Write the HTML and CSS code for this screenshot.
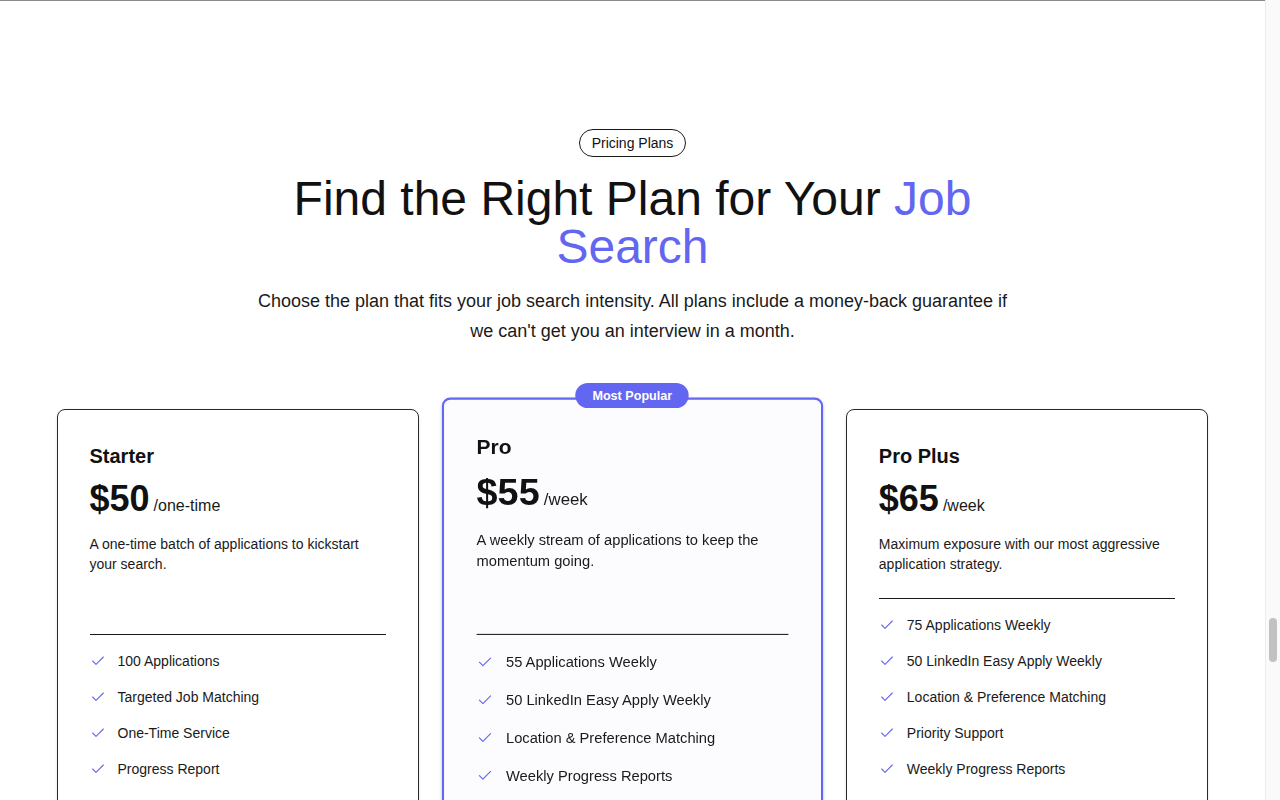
FILE: index.html
```html
<!DOCTYPE html>
<html lang="en">
<head>
<meta charset="utf-8">
<title>Pricing Plans</title>
<link rel="stylesheet" href="styles.css">
</head>
<body>
<div class="page">
  <section class="pricing">
    <div class="intro">
      <span class="tag">Pricing Plans</span>
      <h1 class="title">Find the Right Plan for Your <span class="accent">Job Search</span></h1>
      <p class="lead">Choose the plan that fits your job search intensity. All plans include a money-back guarantee if we can't get you an interview in a month.</p>
    </div>
    <div class="plans">
      <div class="card">
        <h3 class="plan-name">Starter</h3>
        <div class="price"><span class="amount">$50</span><span class="period">/one-time</span></div>
        <p class="desc">A one-time batch of applications to kickstart your search.</p>
        <hr class="divider">
        <ul class="features">
          <li><svg class="check" viewBox="0 0 24 24"><path d="M20 6 9 17l-5-5"/></svg>100 Applications</li>
          <li><svg class="check" viewBox="0 0 24 24"><path d="M20 6 9 17l-5-5"/></svg>Targeted Job Matching</li>
          <li><svg class="check" viewBox="0 0 24 24"><path d="M20 6 9 17l-5-5"/></svg>One-Time Service</li>
          <li><svg class="check" viewBox="0 0 24 24"><path d="M20 6 9 17l-5-5"/></svg>Progress Report</li>
        </ul>
      </div>
      <div class="card card-featured">
        <span class="popular">Most Popular</span>
        <h3 class="plan-name">Pro</h3>
        <div class="price"><span class="amount">$55</span><span class="period">/week</span></div>
        <p class="desc">A weekly stream of applications to keep the momentum going.</p>
        <hr class="divider">
        <ul class="features">
          <li><svg class="check" viewBox="0 0 24 24"><path d="M20 6 9 17l-5-5"/></svg>55 Applications Weekly</li>
          <li><svg class="check" viewBox="0 0 24 24"><path d="M20 6 9 17l-5-5"/></svg>50 LinkedIn Easy Apply Weekly</li>
          <li><svg class="check" viewBox="0 0 24 24"><path d="M20 6 9 17l-5-5"/></svg>Location &amp; Preference Matching</li>
          <li><svg class="check" viewBox="0 0 24 24"><path d="M20 6 9 17l-5-5"/></svg>Weekly Progress Reports</li>
        </ul>
      </div>
      <div class="card">
        <h3 class="plan-name">Pro Plus</h3>
        <div class="price"><span class="amount">$65</span><span class="period">/week</span></div>
        <p class="desc">Maximum exposure with our most aggressive application strategy.</p>
        <hr class="divider">
        <ul class="features">
          <li><svg class="check" viewBox="0 0 24 24"><path d="M20 6 9 17l-5-5"/></svg>75 Applications Weekly</li>
          <li><svg class="check" viewBox="0 0 24 24"><path d="M20 6 9 17l-5-5"/></svg>50 LinkedIn Easy Apply Weekly</li>
          <li><svg class="check" viewBox="0 0 24 24"><path d="M20 6 9 17l-5-5"/></svg>Location &amp; Preference Matching</li>
          <li><svg class="check" viewBox="0 0 24 24"><path d="M20 6 9 17l-5-5"/></svg>Priority Support</li>
          <li><svg class="check" viewBox="0 0 24 24"><path d="M20 6 9 17l-5-5"/></svg>Weekly Progress Reports</li>
        </ul>
      </div>
    </div>
  </section>
</div>
<div class="scrollbar"><div class="thumb"></div></div>
</body>
</html>
```

FILE: styles.css
```css
* { box-sizing: border-box; }
html, body { margin: 0; padding: 0; overflow: hidden; height: 100%; }
body {
  font-family: "Liberation Sans", Arial, sans-serif;
  color: #111;
  background: #fff;
}
.page {
  width: calc(100% - 15px);
}
.pricing {
  border-top: 1px solid #8a8a8a;
  padding: 128px 56px 64px;
}
.intro {
  display: flex;
  flex-direction: column;
  align-items: center;
  text-align: center;
}
.tag {
  display: inline-block;
  border: 1px solid #1a1a1a;
  border-radius: 999px;
  padding: 3px 12px;
  font-size: 14px;
  line-height: 20px;
  color: #111;
}
.title {
  margin: 18px 0 0;
  max-width: 768px;
  font-size: 48px;
  line-height: 48px;
  font-weight: 400;
  color: #111;
}
.accent { color: #6366f1; }
.lead {
  margin: 15px 0 0;
  max-width: 768px;
  font-size: 18px;
  line-height: 30px;
  color: #1a1a1a;
}
.plans {
  margin: 63px auto 0;
  max-width: 1152px;
  display: grid;
  grid-template-columns: repeat(3, 1fr);
  gap: 32px;
}
.card {
  position: relative;
  display: flex;
  flex-direction: column;
  border: 1px solid #2a2a2a;
  border-radius: 8px;
  padding: 32px 32px 84px;
  background: #fff;
  box-shadow: 0 1px 3px rgba(0,0,0,0.12);
}
.card-featured {
  border: 2px solid #6366f1;
  background: #fcfcff;
  transform: scale(1.05);
  padding: 31px 31px 83px;
}
.popular {
  position: absolute;
  top: -16px;
  left: 50%;
  transform: translateX(-50%);
  background: #6366f1;
  color: #fff;
  font-size: 12px;
  font-weight: 700;
  line-height: 16px;
  padding: 4px 16px;
  border-radius: 999px;
  white-space: nowrap;
}
.plan-name {
  margin: 0;
  font-size: 20px;
  line-height: 28px;
  font-weight: 700;
  color: #111;
}
.price {
  margin-top: 9px;
  display: flex;
  align-items: baseline;
  gap: 4px;
  line-height: 40px;
}
.amount {
  font-size: 36px;
  font-weight: 700;
  color: #111;
}
.period {
  font-size: 16px;
  color: #1a1a1a;
}
.desc {
  margin: 8px 0 0;
  font-size: 14px;
  line-height: 20px;
  color: #1a1a1a;
  flex: 1;
}
.divider {
  margin: 24px 0 0;
  border: 0;
  border-top: 1px solid #1a1a1a;
  height: 0;
}
.features {
  list-style: none;
  margin: 16px 0 0;
  padding: 0;
  display: flex;
  flex-direction: column;
  gap: 16px;
}
.features li {
  display: flex;
  align-items: center;
  gap: 12px;
  font-size: 14px;
  line-height: 20px;
  color: #1a1a1a;
}
.check {
  width: 16px;
  height: 16px;
  flex: none;
  fill: none;
  stroke: #6366f1;
  stroke-width: 1.6;
  stroke-linecap: round;
  stroke-linejoin: round;
}
.scrollbar {
  position: fixed;
  top: 0;
  right: 0;
  width: 15px;
  height: 100%;
  background: #fafafa;
  border-left: 1px solid #ececec;
}
.thumb {
  position: absolute;
  top: 618px;
  left: 3px;
  width: 8px;
  height: 44px;
  border-radius: 4px;
  background: #c2c2c2;
}
```
